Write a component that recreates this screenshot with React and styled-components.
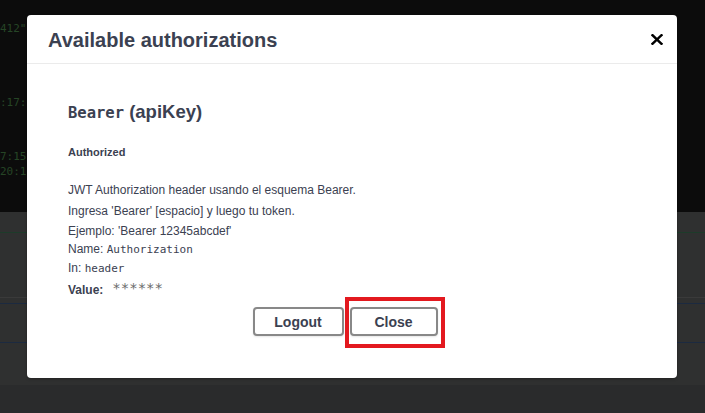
import styled, { createGlobalStyle } from "styled-components";

const GlobalStyle = createGlobalStyle`
  html, body {
    margin: 0;
    padding: 0;
    width: 705px;
    height: 413px;
    overflow: hidden;
    font-family: "Liberation Sans", Arial, sans-serif;
  }
`;

export default function App() {
  return (
    <>
      <GlobalStyle />
      <Page>
        <TopPane>
          <CodeLine $top={22}>412"</CodeLine>
          <CodeLine $top={96}>:17:</CodeLine>
          <CodeLine $top={150}>7:15</CodeLine>
          <CodeLine $top={165}>20:1</CodeLine>
        </TopPane>
        <LowerPane>
          <Rule $color="#1d3b2a" />
          <Gap $h={64} />
          <Rule $color="#3a3a3a" />
          <Gap $h={5} />
          <Rule $color="#1c2a40" />
          <Gap $h={38} />
          <Rule $color="#1c2a40" />
        </LowerPane>
        <BottomPane />

        <Modal>
          <Header>
            <Title>Available authorizations</Title>
            <CloseX aria-label="close">
              <svg width="12" height="11" viewBox="0 0 12 11">
                <path d="M1.5 1.2 L10.5 9.8 M10.5 1.2 L1.5 9.8" stroke="#000" strokeWidth="2.4" strokeLinecap="square" />
              </svg>
            </CloseX>
          </Header>
          <Body>
            <SchemeTitle>
              <Mono>Bearer</Mono> (apiKey)
            </SchemeTitle>
            <Authorized>Authorized</Authorized>
            <Description>
              <Line>JWT Authorization header usando el esquema Bearer.</Line>
              <Line>Ingresa 'Bearer' [espacio] y luego tu token.</Line>
              <Line>Ejemplo: 'Bearer 12345abcdef'</Line>
            </Description>
            <Line $h={18}>
              Name: <Code>Authorization</Code>
            </Line>
            <Line $h={21}>
              In: <Code>header</Code>
            </Line>
            <ValueRow>
              <strong>Value:</strong>
              <Stars>******</Stars>
            </ValueRow>
            <Buttons>
              <Button $w={91}>Logout</Button>
              <Highlight>
                <Button $w={88}>Close</Button>
              </Highlight>
            </Buttons>
          </Body>
        </Modal>
      </Page>
    </>
  );
}

const Page = styled.div`
  position: relative;
  width: 705px;
  height: 413px;
  background: #2e2f30;
  display: flex;
  flex-direction: column;
`;

const TopPane = styled.div`
  position: relative;
  height: 212px;
  background: #0c0c0c;
`;

const CodeLine = styled.div`
  position: absolute;
  left: 0;
  top: ${(p) => p.$top}px;
  font-family: "DejaVu Sans Mono", monospace;
  font-size: 11px;
  color: #264526;
`;

const LowerPane = styled.div`
  height: 173px;
  background: #2f3030;
  padding-top: 20px;
  box-sizing: border-box;
`;

const Rule = styled.div`
  height: 1px;
  background: ${(p) => p.$color};
`;

const Gap = styled.div`
  height: ${(p) => p.$h}px;
`;

const BottomPane = styled.div`
  flex: 1;
  background: #2a2b2c;
`;

const Modal = styled.div`
  position: absolute;
  left: 27px;
  top: 15px;
  width: 650px;
  height: 363px;
  background: #fff;
  border-radius: 4px;
  box-shadow: 0 1px 3px rgba(0, 0, 0, 0.3);
  color: #3b4151;
`;

const Header = styled.div`
  display: flex;
  align-items: center;
  justify-content: space-between;
  height: 49px;
  padding: 0 14px 0 21px;
  border-bottom: 1px solid #ebebeb;
  box-sizing: border-box;
`;

const Title = styled.h3`
  margin: 0;
  font-size: 20px;
  font-weight: bold;
  color: #3b4151;
  padding-top: 2px;
`;

const CloseX = styled.div`
  display: flex;
  align-items: center;
  padding-top: 1px;
`;

const Body = styled.div`
  padding: 36px 40px 0 41px;
  display: flex;
  flex-direction: column;
`;

const SchemeTitle = styled.h4`
  margin: 0;
  height: 22px;
  font-size: 18.5px;
  font-weight: bold;
  line-height: 24px;
  color: #3b4151;
`;

const Mono = styled.span`
  font-family: "DejaVu Sans Mono", monospace;
  font-size: 15.5px;
`;

const Authorized = styled.h6`
  margin: 22px 0 0;
  font-size: 11px;
  font-weight: bold;
  line-height: 16px;
  color: #3b4151;
`;

const Description = styled.div`
  margin-top: 20px;
  margin-bottom: -1.5px;
`;

const Line = styled.div`
  font-size: 12px;
  line-height: ${(p) => p.$h || 20.5}px;
  height: ${(p) => p.$h || 20.5}px;
  color: #3b4151;
`;

const Code = styled.span`
  font-family: "DejaVu Sans Mono", monospace;
  font-size: 11px;
  color: #3b4151;
`;

const ValueRow = styled.div`
  display: flex;
  align-items: center;
  gap: 9px;
  font-size: 12px;
  height: 21px;
  strong {
    font-size: 12px;
  }
`;

const Stars = styled.span`
  font-family: "DejaVu Sans Mono", monospace;
  font-size: 14px;
  color: #6b6b6b;
  margin-top: -3px;
`;

const Buttons = styled.div`
  display: flex;
  justify-content: center;
  gap: 6px;
  margin-top: 7px;
  padding-right: 15px;
`;

const Button = styled.button`
  width: ${(p) => p.$w}px;
  height: 29px;
  background: #fff;
  border: 2px solid #888;
  border-radius: 4px;
  font-family: "Liberation Sans", Arial, sans-serif;
  font-size: 14px;
  font-weight: bold;
  color: #3b4151;
  box-shadow: 0 1px 2px rgba(0, 0, 0, 0.1);
  padding: 0;
`;

const Highlight = styled.div`
  position: relative;
  &::after {
    content: "";
    position: absolute;
    left: -5px;
    top: -10px;
    width: 92px;
    height: 43px;
    border: 4px solid #e3191f;
    pointer-events: none;
  }
`;
